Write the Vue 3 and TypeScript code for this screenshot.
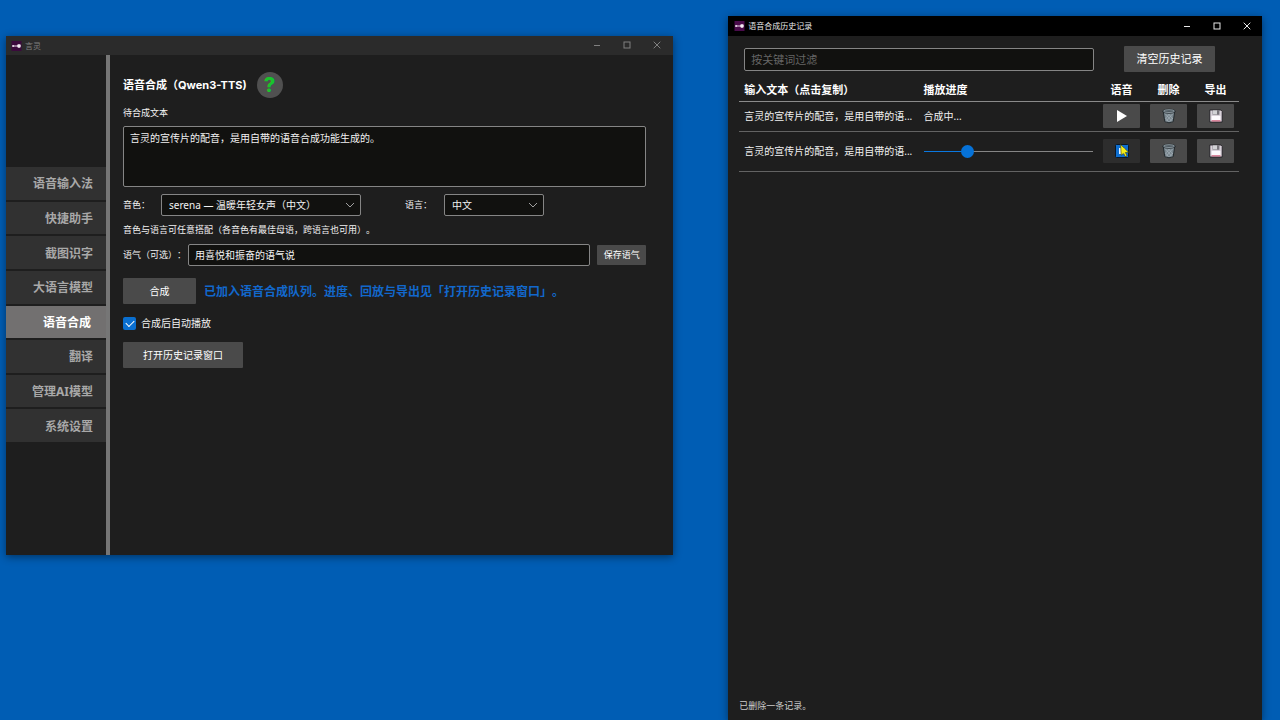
<script setup lang="ts">
import { ref } from 'vue'

interface HistoryItem {
  id: number
  text: string
  status: 'pending' | 'playing'
}

const navItems: string[] = ['语音输入法', '快捷助手', '截图识字', '大语言模型', '语音合成', '翻译', '管理AI模型', '系统设置']
const activeNav = ref('语音合成')
const sourceText = ref('言灵的宣传片的配音，是用自带的语音合成功能生成的。')
const voice = ref('serena')
const language = ref('zh')
const tone = ref('用喜悦和振奋的语气说')
const autoPlay = ref(true)
const keyword = ref('')
const progress = ref(24)
const history: HistoryItem[] = [
  { id: 1, text: '言灵的宣传片的配音，是用自带的语...', status: 'pending' },
  { id: 2, text: '言灵的宣传片的配音，是用自带的语...', status: 'playing' },
]
</script>

<template>
  <div class="desktop" lang="zh-CN">
    <section class="window main-window">
      <header class="titlebar inactive">
        <svg class="app-icon" viewBox="0 0 12 12" aria-hidden="true">
          <rect width="12" height="12" fill="#3b0a3c" />
          <path d="M1 6H8" stroke="#e8d8e8" stroke-width="1.2" />
          <circle cx="2" cy="6" r="1.2" fill="#e8d8e8" />
          <rect x="7" y="4" width="4" height="4" rx="1" fill="#f4eef4" />
        </svg>
        <span class="caption">言灵</span>
        <div class="window-controls">
          <button type="button" aria-label="最小化"><svg viewBox="0 0 8 8"><path d="M1 4.5H7" /></svg></button>
          <button type="button" aria-label="最大化"><svg viewBox="0 0 8 8"><rect x="1" y="1" width="6" height="6" /></svg></button>
          <button type="button" aria-label="关闭"><svg viewBox="0 0 8 8"><path d="M.7 .7L7.3 7.3M7.3 .7L.7 7.3" /></svg></button>
        </div>
      </header>
      <div class="body">
        <nav class="sidebar">
          <button
            v-for="item in navItems"
            :key="item"
            type="button"
            :class="['nav-item', { active: item === activeNav }]"
            @click="activeNav = item"
          >{{ item }}</button>
        </nav>
        <main class="panel">
          <div class="heading">
            <h1>语音合成（Qwen3-TTS)</h1>
            <button class="help" type="button" aria-label="帮助">?</button>
          </div>
          <label class="source-label" for="source">待合成文本</label>
          <textarea id="source" v-model="sourceText" class="field source"></textarea>
          <div class="row options">
            <label class="voice-label" for="voice">音色：</label>
            <div class="select voice">
              <select id="voice" v-model="voice" class="field">
                <option value="serena">serena — 温暖年轻女声（中文）</option>
              </select>
              <svg viewBox="0 0 10 6" aria-hidden="true"><path d="M1 1L5 5L9 1" /></svg>
            </div>
            <label class="language-label" for="language">语言：</label>
            <div class="select language">
              <select id="language" v-model="language" class="field">
                <option value="zh">中文</option>
              </select>
              <svg viewBox="0 0 10 6" aria-hidden="true"><path d="M1 1L5 5L9 1" /></svg>
            </div>
          </div>
          <p class="hint">音色与语言可任意搭配（各音色有最佳母语，跨语言也可用）。</p>
          <div class="row">
            <label class="tone-label" for="tone">语气（可选）：</label>
            <input id="tone" v-model="tone" class="field tone" type="text" />
            <button class="btn save" type="button">保存语气</button>
          </div>
          <div class="row generate">
            <button class="btn submit" type="button">合成</button>
            <span class="message">已加入语音合成队列。进度、回放与导出见「打开历史记录窗口」。</span>
          </div>
          <label class="auto-play">
            <input v-model="autoPlay" type="checkbox" />
            <span>合成后自动播放</span>
          </label>
          <button class="btn open-history" type="button">打开历史记录窗口</button>
        </main>
      </div>
    </section>

    <section class="window history-window">
      <header class="titlebar">
        <svg class="app-icon" viewBox="0 0 12 12" aria-hidden="true">
          <rect width="12" height="12" fill="#4a0c4c" />
          <path d="M1 6H8" stroke="#e8d8e8" stroke-width="1.2" />
          <circle cx="2" cy="6" r="1.2" fill="#e8d8e8" />
          <rect x="7" y="4" width="4" height="4" rx="1" fill="#f4eef4" />
        </svg>
        <span class="caption">语音合成历史记录</span>
        <div class="window-controls">
          <button type="button" aria-label="最小化"><svg viewBox="0 0 8 8"><path d="M1 4.5H7" /></svg></button>
          <button type="button" aria-label="最大化"><svg viewBox="0 0 8 8"><rect x="1" y="1" width="6" height="6" /></svg></button>
          <button type="button" aria-label="关闭"><svg viewBox="0 0 8 8"><path d="M.7 .7L7.3 7.3M7.3 .7L.7 7.3" /></svg></button>
        </div>
      </header>
      <div class="history-body">
        <div class="filter">
          <input v-model="keyword" class="field" type="text" placeholder="按关键词过滤" aria-label="按关键词过滤" />
          <button class="btn clear" type="button">清空历史记录</button>
        </div>
        <table>
          <thead>
            <tr>
              <th>输入文本（点击复制）</th>
              <th>播放进度</th>
              <th class="action">语音</th>
              <th class="action">删除</th>
              <th class="action">导出</th>
            </tr>
          </thead>
          <tbody>
            <tr v-for="item in history" :key="item.id" :class="item.status">
              <td>{{ item.text }}</td>
              <td>
                <template v-if="item.status === 'pending'">合成中...</template>
                <input
                  v-else
                  v-model.number="progress"
                  type="range"
                  min="0"
                  max="100"
                  aria-label="播放进度"
                  :style="{ '--played': progress + '%' }"
                />
              </td>
              <td class="action">
                <button v-if="item.status === 'pending'" class="btn icon" type="button" aria-label="播放">
                  <svg viewBox="0 0 16 16"><path d="M3 2L13 8L3 14Z" fill="#fff" /></svg>
                </button>
                <button v-else class="btn icon pressed" type="button" aria-label="暂停">
                  <svg viewBox="0 0 16 16">
                    <rect x="1.5" y="1.5" width="13" height="13" rx="1" fill="#0f6fd0" stroke="#07182a" />
                    <path d="M5 5h2v6H5zM9 5h2v6H9z" fill="#e6f2ff" />
                    <path d="M6.6 1.6L14.6 9.2L11.4 9.5L13 12.8L11.2 13.6L9.6 10.3L7.2 12.2Z" fill="#f4ee18" stroke="#3d3d10" stroke-width=".6" />
                  </svg>
                </button>
              </td>
              <td class="action">
                <button class="btn icon" type="button" aria-label="删除">
                  <svg viewBox="0 0 16 16">
                    <path d="M2.2 3.2L3.8 13.6Q8 16 12.2 13.6L13.8 3.2Z" fill="#78858d" stroke="#1c2226" stroke-width=".9" />
                    <path d="M4.5 6L11 13.5M7 5.5L12 11M4.7 10L7.6 14M11.5 6L5 13.5M9 5.5L4.3 10.5M11.5 10L8.5 14" stroke="#a9b6bd" stroke-width=".6" />
                    <ellipse cx="8" cy="3.2" rx="6.2" ry="2" fill="#3f494f" stroke="#1c2226" stroke-width=".8" />
                    <ellipse cx="8" cy="3.1" rx="5.4" ry="1.4" fill="#4b565d" stroke="#a9b6bd" stroke-width=".7" />
                  </svg>
                </button>
              </td>
              <td class="action">
                <button class="btn icon" type="button" aria-label="导出">
                  <svg viewBox="0 0 16 16">
                    <path d="M1.8 2H12.8L14.2 3.4V14H1.8Z" fill="#d9d2da" stroke="#1e1c20" stroke-width=".9" />
                    <rect x="4.6" y="2.4" width="6.8" height="4.4" fill="#77747a" />
                    <rect x="5" y="2.4" width="4" height="4" fill="#d2d2d5" />
                    <rect x="3.6" y="8" width="8.8" height="4.4" fill="#fdfafd" />
                    <rect x="3.6" y="12.2" width="8.8" height="1.3" fill="#d8708a" />
                  </svg>
                </button>
              </td>
            </tr>
          </tbody>
        </table>
        <p class="status">已删除一条记录。</p>
      </div>
    </section>
  </div>
</template>

<style>
body {
  margin: 0;
  background: #005db4;
}
</style>

<style scoped>
.desktop,
.desktop * {
  box-sizing: border-box;
}

.desktop {
  display: grid;
  grid-template-columns: 5fr 4fr;
  gap: 55px;
  align-items: start;
  min-height: 100vh;
  padding: 0 18px 0 6px;
  overflow: hidden;
  background: #005db4;
  color: #f2f2f2;
  font: 10px/16px "Noto Sans", "Noto Sans CJK SC", sans-serif;
  text-spacing-trim: space-all;
}

button,
input,
select,
textarea {
  margin: 0;
  color: inherit;
  font: inherit;
}

.window {
  display: flex;
  flex-direction: column;
  min-width: 0;
  background: #1e1e1e;
  box-shadow: 0 2px 8px rgba(0, 0, 0, 0.45);
}

.main-window {
  margin-top: 36px;
}

.history-window {
  align-self: stretch;
  margin-top: 16px;
}

.titlebar {
  display: flex;
  align-items: center;
  height: 20px;
  padding: 0 0 0 6px;
  background: #000;
  color: #e8e8e8;
  font-size: 8px;
}

.titlebar.inactive {
  height: 19px;
  padding: 0 1px 0 5px;
  background: #2b2b2b;
  color: #808080;
}

.app-icon {
  width: 11px;
  height: 10px;
  margin-right: 3px;
}

.window-controls {
  display: flex;
  height: 100%;
  margin-left: auto;
}

.inactive .window-controls {
  height: 18px;
  margin-bottom: auto;
}

.window-controls button {
  display: flex;
  align-items: center;
  justify-content: center;
  width: 30px;
  padding: 0;
  border: 0;
  background: none;
}

.window-controls svg {
  width: 8px;
  height: 8px;
  fill: none;
  stroke: currentColor;
  stroke-width: 1;
}

.body {
  display: flex;
  min-height: 500px;
}

.sidebar {
  display: grid;
  grid-template-rows: repeat(8, 1fr);
  gap: 2px;
  flex: none;
  width: 104px;
  padding: 112px 0 113px;
  border-right: 4px solid #767676;
}

.nav-item {
  padding: 2px 13px 0 0;
  border: 0;
  background: #313131;
  color: #a8a8a8;
  font-size: 12px;
  font-weight: 700;
  text-align: right;
}

.nav-item.active {
  padding-right: 15px;
  background: #727070;
  color: #fff;
}

.panel {
  display: flex;
  flex: 1;
  flex-direction: column;
  align-items: flex-start;
  min-width: 0;
  padding: 17px 27px 16px 13px;
}

.heading {
  display: flex;
  align-items: center;
  gap: 10px;
}

h1 {
  margin: 0;
  color: #fff;
  font-family: Inter, "Noto Sans CJK SC", sans-serif;
  font-size: 11px;
  font-weight: 700;
}

.help {
  width: 26px;
  height: 26px;
  padding: 0;
  border: 0;
  border-radius: 50%;
  background: #505050;
  color: #18c42c;
  font-family: Inter, sans-serif;
  font-size: 20px;
  font-weight: 800;
  line-height: 26px;
}

.source-label,
.row label,
.hint,
.save,
.status {
  font-size: 9px;
}

.source-label {
  margin: 7px 0 5px;
}

.field {
  border: 1px solid #858585;
  border-radius: 2px;
  outline: 0;
  background: #11110f;
}

.source {
  display: block;
  width: 100%;
  height: 61px;
  padding: 3px 6px;
  resize: none;
}

.row {
  display: flex;
  align-items: center;
  width: 100%;
}

.options {
  margin-top: 7px;
}

.select {
  position: relative;
}

.select select {
  width: 100%;
  height: 22px;
  padding: 0 20px 0 7px;
  appearance: none;
}

.select svg {
  position: absolute;
  top: 8px;
  right: 6px;
  width: 10px;
  height: 6px;
  fill: none;
  pointer-events: none;
  stroke: #a0a0a0;
}

.voice-label {
  width: 38px;
}

.voice {
  width: 200px;
}

.language-label {
  width: 39px;
  margin-left: 44px;
}

.language {
  width: 100px;
}

.hint {
  margin: 6px 0;
}

.tone-label {
  flex: none;
  width: 65px;
}

.tone {
  flex: 1;
  min-width: 0;
  height: 22px;
  margin-right: 7px;
  padding: 0 6px 2px;
}

.btn {
  height: 26px;
  padding: 0 20px;
  border: 0;
  border-radius: 1px;
  background: #4a4a4a;
  color: #fff;
}

.save {
  width: 49px;
  height: 20px;
  padding: 0;
}

.generate {
  gap: 8px;
  margin-top: 12px;
}

.submit {
  width: 73px;
}

.message {
  padding-top: 2px;
  color: #1268cc;
  font-size: 12px;
  font-weight: 700;
  white-space: nowrap;
}

.auto-play {
  display: flex;
  align-items: center;
  gap: 5px;
  margin: 11px 0;
}

.auto-play input {
  display: grid;
  place-items: center;
  width: 13px;
  height: 13px;
  border-radius: 2px;
  appearance: none;
  background: #0a6fd0;
}

.auto-play input:checked::after {
  width: 7px;
  height: 4px;
  margin-top: -2px;
  border: solid #fff;
  border-width: 0 0 1px 1px;
  content: "";
  transform: rotate(-45deg);
}

.history-body {
  display: flex;
  flex: 1;
  flex-direction: column;
  padding: 10px 23px 6px 11px;
}

.filter {
  display: flex;
  align-items: center;
  gap: 30px;
  padding: 0 24px 0 5px;
  font-size: 11px;
}

.filter .field {
  flex: 1;
  min-width: 0;
  height: 23px;
  padding: 0 6px;
}

.filter .field::placeholder {
  color: #666;
}

.clear {
  width: 91px;
  padding: 0;
}

table {
  width: 100%;
  margin-top: 5px;
  border-collapse: collapse;
  table-layout: fixed;
}

th,
td {
  padding: 0 5px;
  text-align: left;
  white-space: nowrap;
}

th {
  height: 24px;
  padding-top: 2px;
  border-bottom: 1px solid #8a8a8a;
  color: #fff;
  font-size: 11px;
  font-weight: 700;
}

td {
  height: 30px;
  border-bottom: 1px solid #636363;
}

.playing td {
  height: 40px;
}

.action {
  width: 47px;
  text-align: center;
}

.icon {
  display: flex;
  align-items: center;
  justify-content: center;
  width: 37px;
  height: 24px;
  padding: 0;
}

.icon svg {
  width: 16px;
  height: 16px;
}

.pressed {
  background: #2d2d2d;
}

input[type="range"] {
  display: block;
  width: 100%;
  height: 15px;
  appearance: none;
  background: transparent;
}

input[type="range"]::-webkit-slider-runnable-track {
  height: 1px;
  background: linear-gradient(to right, #0a78e0 var(--played), #858585 var(--played));
}

input[type="range"]::-webkit-slider-thumb {
  width: 13px;
  height: 13px;
  margin-top: -6px;
  border-radius: 50%;
  appearance: none;
  background: #0672d8;
}

.status {
  margin: auto 0 0;
  color: #ccc;
}
</style>
